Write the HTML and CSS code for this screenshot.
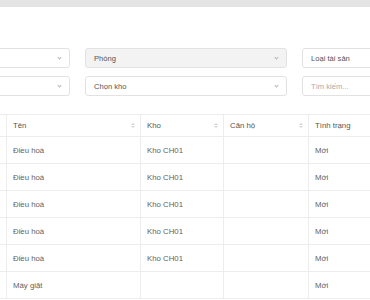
FILE: index.html
```html
<!DOCTYPE html>
<html lang="vi">
<head>
    <meta charset="UTF-8">
    <meta name="viewport" content="width=device-width, initial-scale=1.0">
    <title>Danh sách tài sản</title>
    <link rel="stylesheet" href="styles.css">
</head>
<body>
    <div class="top-bar"></div>

    <div class="page">
        <div class="filters">
            <div class="field select">
                <span class="value"></span>
                <span class="chevron"></span>
            </div>
            <div class="field select disabled">
                <span class="value">Phòng</span>
                <span class="chevron"></span>
            </div>
            <div class="field">
                <span class="value">Loại tài sản</span>
            </div>
            <div class="field select">
                <span class="value"></span>
                <span class="chevron"></span>
            </div>
            <div class="field select">
                <span class="value">Chọn kho</span>
                <span class="chevron"></span>
            </div>
            <div class="field">
                <span class="value placeholder">Tìm kiếm...</span>
            </div>
        </div>

        <table class="asset-table">
            <colgroup>
                <col class="col-first">
                <col class="col-name">
                <col class="col-store">
                <col class="col-flat">
                <col class="col-status">
            </colgroup>
            <thead>
                <tr>
                    <th></th>
                    <th><div class="th-inner">Tên <span class="sorter"></span></div></th>
                    <th><div class="th-inner">Kho <span class="sorter"></span></div></th>
                    <th><div class="th-inner">Căn hộ <span class="sorter"></span></div></th>
                    <th><div class="th-inner">Tình trạng</div></th>
                </tr>
            </thead>
            <tbody>
                <tr><td></td><td>Điều hoà</td><td>Kho CH01</td><td></td><td>Mới</td></tr>
                <tr><td></td><td>Điều hoà</td><td>Kho CH01</td><td></td><td>Mới</td></tr>
                <tr><td></td><td>Điều hoà</td><td>Kho CH01</td><td></td><td>Mới</td></tr>
                <tr><td></td><td>Điều hoà</td><td>Kho CH01</td><td></td><td>Mới</td></tr>
                <tr><td></td><td>Điều hoà</td><td>Kho CH01</td><td></td><td>Mới</td></tr>
                <tr><td></td><td>Máy giặt</td><td></td><td></td><td>Mới</td></tr>
            </tbody>
        </table>
    </div>
</body>
</html>
```

FILE: styles.css
```css
body {
    margin: 0;
    font-family: "Liberation Sans", Arial, sans-serif;
    color: #5f5f5f;
    background: #fff;
    overflow: hidden;
}
.top-bar {
    height: 7px;
    background-color: #e4e4e4;
}
.page {
    margin-left: -132px; /* trang bị cuộn ngang */
    width: 640px;
}
.filters {
    display: grid;
    grid-template-columns: 202px 202px 202px;
    column-gap: 15px;
    row-gap: 8px;
    margin-top: 41px;
}
.field {
    height: 20px;
    box-sizing: border-box;
    border: 1px solid #e2e2e2;
    border-radius: 3px;
    display: flex;
    align-items: center;
    justify-content: space-between;
    padding: 0 6px 0 8px;
    font-size: 7.6px;
    color: #555;
}
.field.disabled {
    background-color: #f3f3f3;
}
.placeholder {
    color: #aaa;
}
.chevron {
    width: 2px;
    height: 2px;
    border-right: 1px solid #b5b5b5;
    border-bottom: 1px solid #b5b5b5;
    transform: rotate(45deg);
    margin-top: -1px;
    margin-right: 2px;
}
.asset-table {
    margin-top: 18px;
    border-collapse: collapse;
    table-layout: fixed;
    width: 640px;
    font-size: 7.8px;
}
.col-first { width: 138px; }
.col-name { width: 134px; }
.col-store { width: 83px; }
.col-flat { width: 85px; }
.col-status { width: 200px; }
.asset-table th,
.asset-table td {
    border: 1px solid #ededed;
    text-align: left;
    padding: 0 6px;
    font-weight: normal;
}
.asset-table th {
    height: 21px;
    color: #555;
}
.asset-table td {
    height: 26px;
    color: #5f5f5f;
}
.th-inner {
    display: flex;
    justify-content: space-between;
    align-items: center;
}
.sorter {
    display: flex;
    flex-direction: column;
    gap: 1px;
    margin-right: -1px;
}
.sorter::before,
.sorter::after {
    content: "";
    border-left: 2px solid transparent;
    border-right: 2px solid transparent;
}
.sorter::before {
    border-bottom: 2px solid #d6d6d6;
}
.sorter::after {
    border-top: 2px solid #d6d6d6;
}
```
